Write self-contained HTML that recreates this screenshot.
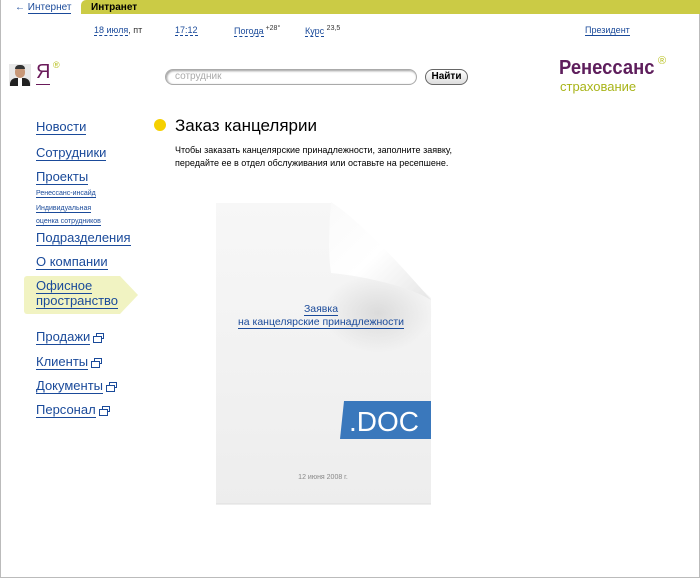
<!DOCTYPE html>
<html><head><meta charset="utf-8"><style>
*{margin:0;padding:0;box-sizing:border-box}
body{width:700px;height:578px;background:#fff;font-family:"Liberation Sans","DejaVu Sans",sans-serif;position:relative;overflow:hidden;border:1px solid #bbb;border-top:none}
a{color:#1a4a9a;text-decoration:none;border-bottom:1px solid #1a4a9a}
.abs{position:absolute}
.nav a{font-size:13px}
.nav div{position:absolute;left:35px}
.ext{display:inline-block;width:8px;height:6px;border:1px solid #1a4a9a;margin-left:6px;position:relative;vertical-align:2px}
.ext:before{content:"";position:absolute;left:-4px;top:2px;width:7px;height:5px;border:1px solid #1a4a9a;background:#fff}
</style></head><body>
<div class="abs" style="left:80px;top:0;width:620px;height:14px;background:#cbcb45;border-radius:5px 0 0 0"></div>
<div class="abs" style="left:14px;top:2px;font-size:10px;color:#1a4a9a">← <a>Интернет</a></div>
<div class="abs" style="left:90px;top:2px;font-size:10px;font-weight:bold;color:#000">Интранет</div>
<div class="abs" style="left:93px;top:25px;font-size:9px;color:#333"><a style="border-bottom-style:dashed">18 июля</a>, пт</div>
<div class="abs" style="left:174px;top:25px;font-size:9px"><a style="border-bottom-style:dashed">17:12</a></div>
<div class="abs" style="left:233px;top:25px;font-size:9px;color:#333"><a style="border-bottom-style:dashed">Погода</a><sup style="font-size:7px"> +28°</sup></div>
<div class="abs" style="left:304px;top:25px;font-size:9px;color:#333"><a style="border-bottom-style:dashed">Курс</a> <sup style="font-size:7px">23,5</sup></div>
<div class="abs" style="left:584px;top:25px;font-size:9px"><a>Президент</a></div>
<div class="abs" style="left:8px;top:64px;width:22px;height:22px;background:#e8e8e8;overflow:hidden">
<div style="position:absolute;left:6px;top:2px;width:10px;height:12px;border-radius:5px;background:#c89878"></div>
<div style="position:absolute;left:6px;top:1px;width:10px;height:4px;border-radius:4px 4px 0 0;background:#333"></div>
<div style="position:absolute;left:1px;top:14px;width:20px;height:10px;border-radius:6px 6px 0 0;background:#222"></div>
<div style="position:absolute;left:9px;top:14px;width:4px;height:8px;background:#fff"></div></div>
<div class="abs" style="left:35px;top:60px;font-size:20px;color:#6a1a5a;border-bottom:1px solid #6a1a5a;line-height:24px">Я</div>
<div class="abs" style="left:52px;top:60px;font-size:9px;color:#b8c020">®</div>
<div class="abs" style="left:164px;top:69px;width:252px;height:16px;border:1px solid #aaa;border-radius:8px;font-size:10px;color:#aaa;padding:1px 9px;box-shadow:inset 1px 1px 2px #999">сотрудник</div>
<div class="abs" style="left:424px;top:69px;width:43px;height:16px;border:1px solid #666;border-radius:8px;font-size:10px;font-weight:bold;text-align:center;line-height:14px;background:linear-gradient(#fff,#ddd)">Найти</div>
<div class="abs" style="left:558px;top:57px;font-size:20px;font-weight:bold;color:#5e1e5c;transform:scaleX(0.92);transform-origin:left">Ренессанс</div>
<div class="abs" style="left:657px;top:55px;font-size:11px;color:#b8c020">®</div>
<div class="abs" style="left:559px;top:79px;font-size:13px;color:#a8b418">страхование</div>
<div class="nav">
<div style="top:118px"><a>Новости</a></div>
<div style="top:144px"><a>Сотрудники</a></div>
<div style="top:168px"><a>Проекты</a></div>
<div style="top:186px;line-height:10px"><a style="font-size:7px">Ренессанс-инсайд</a></div>
<div style="top:201px;line-height:10px"><a style="font-size:7px">Индивидуальная</a><br><a style="font-size:7px">оценка сотрудников</a></div>
<div style="top:229px"><a>Подразделения</a></div>
<div style="top:253px"><a>О компании</a></div>
<div class="abs" style="left:23px;top:276px;width:96px;height:38px;background:#f1f3c2;border-radius:3px 0 0 3px"></div>
<div class="abs" style="left:119px;top:276px;width:0;height:0;border-top:19px solid transparent;border-bottom:19px solid transparent;border-left:18px solid #f1f3c2"></div>
<div style="top:278px;line-height:15px"><a>Офисное</a><br><a>пространство</a></div>
<div style="top:328px"><a>Продажи</a><span class="ext"></span></div>
<div style="top:353px"><a>Клиенты</a><span class="ext"></span></div>
<div style="top:377px"><a>Документы</a><span class="ext"></span></div>
<div style="top:401px"><a>Персонал</a><span class="ext"></span></div>
</div>
<div class="abs" style="left:153px;top:119px;width:12px;height:12px;border-radius:50%;background:#f5d000"></div>
<div class="abs" style="left:174px;top:116px;font-size:17px;color:#000">Заказ канцелярии</div>
<div class="abs" style="left:174px;top:144px;font-size:9px;line-height:13px;color:#000">Чтобы заказать канцелярские принадлежности, заполните заявку,<br>передайте ее в отдел обслуживания или оставьте на ресепшене.</div>
<svg class="abs" style="left:212px;top:198px" width="224" height="310">
<defs><linearGradient id="g" x1="0" y1="0" x2="0" y2="1"><stop offset="0" stop-color="#f7f7f7"/><stop offset="1" stop-color="#ededed"/></linearGradient>
<linearGradient id="f" x1="0" y1="0" x2="1" y2="1"><stop offset="0" stop-color="#fafafa"/><stop offset="0.5" stop-color="#ffffff"/><stop offset="1" stop-color="#e6e6e6"/></linearGradient>
<radialGradient id="s" cx="0.5" cy="0.5" r="0.5"><stop offset="0" stop-color="#000" stop-opacity="0.10"/><stop offset="1" stop-color="#000" stop-opacity="0"/></radialGradient></defs>
<path d="M3 5 H118 L218 100 V306 H3 Z" fill="url(#g)"/>
<path d="M3 306 H218" stroke="#ddd"/>
<ellipse cx="165" cy="115" rx="55" ry="40" fill="url(#s)"/>
<path d="M118 4 C116 30 115 55 118 75 C150 78 195 88 218 102 C195 75 150 25 118 4 Z" fill="url(#f)"/>
<path d="M131 203 H218 V241 H127 Z" fill="#3a78bc"/>
<text x="136" y="233" font-family="Liberation Sans" font-size="28" fill="#fff">.DOC</text>
<text x="110" y="281" text-anchor="middle" font-family="Liberation Sans" font-size="7" fill="#888">12 июня 2008 г.</text>
</svg>
<div class="abs" style="left:215px;top:303px;width:210px;text-align:center;font-size:10.5px;line-height:13px"><a>Заявка</a><br><a>на канцелярские принадлежности</a></div>
</body></html>
